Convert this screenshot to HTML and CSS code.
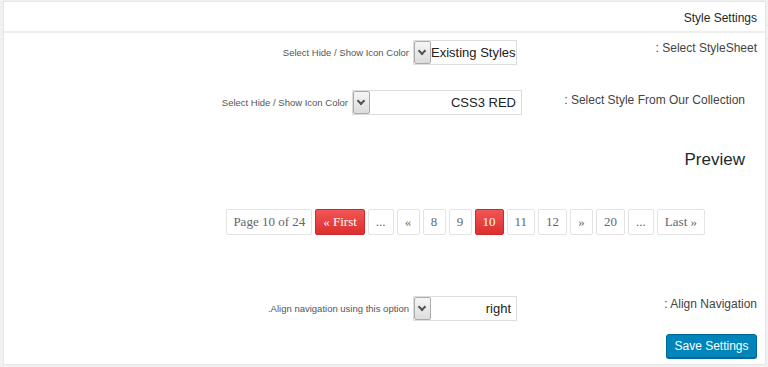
FILE: index.html
```html
<!doctype html>
<html lang="en">
  <head>
    <meta charset="UTF-8" />
    <title>Style Settings</title>
    <link rel="stylesheet" href="styles.css">
  </head>
  <body>
    <div class="card">
      <div class="card-head">Style Settings</div>

      <div class="row row-first">
        <div class="field">
          <span class="hint">Select Hide / Show Icon Color</span>
          <div class="select select-short">
            <span class="select-arrow"></span>
            <span class="select-value">Existing Styles</span>
          </div>
        </div>
        <div class="label">: Select StyleSheet</div>
      </div>

      <div class="row row-second">
        <div class="field">
          <span class="hint">Select Hide / Show Icon Color</span>
          <div class="select select-long">
            <span class="select-arrow"></span>
            <span class="select-value">CSS3 RED</span>
          </div>
        </div>
        <div class="label label-inset">: Select Style From Our Collection</div>
      </div>

      <h2 class="preview-title">Preview</h2>

      <div class="pager">
        <span class="page-item page-count">Page 10 of 24</span>
        <span class="page-item page-red">« First</span>
        <span class="page-item">...</span>
        <span class="page-item">«</span>
        <span class="page-item">8</span>
        <span class="page-item">9</span>
        <span class="page-item page-red">10</span>
        <span class="page-item">11</span>
        <span class="page-item">12</span>
        <span class="page-item">»</span>
        <span class="page-item">20</span>
        <span class="page-item">...</span>
        <span class="page-item">Last »</span>
      </div>

      <div class="row row-align">
        <div class="field">
          <span class="hint">.Align navigation using this option</span>
          <div class="select select-short">
            <span class="select-arrow"></span>
            <span class="select-value">right</span>
          </div>
        </div>
        <div class="label">: Align Navigation</div>
      </div>

      <div class="actions">
        <button type="button" class="button">Save Settings</button>
      </div>
    </div>
  </body>
</html>
```

FILE: styles.css
```css
* {
  margin: 0;
  padding: 0;
  box-sizing: border-box;
}

html,
body {
  height: 100%;
  background-color: #f1f1f1;
  font-family: "Liberation Sans", Arial, sans-serif;
  color: #444;
}

.card {
  margin: 1px 2px 0 3px;
  height: 364px;
  background-color: #fff;
  border: 1px solid #e5e5e5;
}

.card-head {
  height: 31px;
  padding: 9px 8px 0 0;
  text-align: right;
  font-size: 12px;
  color: #23282d;
  border-bottom: 2px solid #eee;
}

.row {
  display: flex;
  justify-content: flex-end;
  align-items: flex-start;
}

.row-first {
  margin-top: 7px;
}

.row-second {
  margin-top: 25px;
}

.row-align {
  margin-top: 61px;
}

.field {
  display: flex;
  align-items: center;
  gap: 4px;
}

.hint {
  font-size: 9.5px;
  color: #555;
}

.label {
  width: 248px;
  padding: 1px 8px 0 0;
  text-align: right;
  font-size: 12px;
  color: #444;
}

.label-inset {
  width: 243px;
  padding-right: 20px;
  padding-top: 3px;
}

.select {
  display: flex;
  height: 25px;
  border: 1px solid #ddd;
  background-color: #fff;
}

.select-short {
  width: 104px;
}

.select-long {
  width: 170px;
}

.select-arrow {
  position: relative;
  width: 17px;
  flex: none;
  background: linear-gradient(#f6f6f6, #dcdcdc);
  border: 1px solid #aaa;
  border-radius: 2px;
}

/* chevron drawn as a rotated corner */
.select-arrow::after {
  content: "";
  position: absolute;
  left: 4px;
  top: 6px;
  width: 4px;
  height: 4px;
  border-right: 2px solid #555;
  border-bottom: 2px solid #555;
  transform: rotate(45deg);
}

.select-value {
  flex: 1;
  padding: 0 5px 0 0;
  line-height: 23px;
  text-align: right;
  font-size: 13px;
  color: #222;
  white-space: nowrap;
}

.preview-title {
  margin-top: 35px;
  padding-right: 20px;
  text-align: right;
  font-size: 17px;
  font-weight: normal;
  line-height: 20px;
  color: #23282d;
}

.pager {
  display: flex;
  justify-content: flex-end;
  gap: 3px;
  margin-top: 39px;
  padding-right: 60px;
}

.page-item {
  min-width: 23px;
  height: 26px;
  padding: 0 7px;
  line-height: 24px;
  text-align: center;
  font-family: "Liberation Serif", "Times New Roman", serif;
  font-size: 13px;
  color: #666;
  background-color: #fff;
  border: 1px solid #e3e3e3;
  border-radius: 2px;
}

.page-count {
  padding: 0 6px;
}

.page-red {
  color: #fff;
  background: linear-gradient(#f25555, #dc2f2f);
  border-color: #c92a2a;
}

.actions {
  display: flex;
  justify-content: flex-end;
  margin-top: 13px;
  padding-right: 8px;
}

.button {
  width: 91px;
  height: 24px;
  font-family: "Liberation Sans", Arial, sans-serif;
  font-size: 12px;
  color: #fff;
  background-color: #0085ba;
  border: 1px solid #006799;
  border-radius: 3px;
  box-shadow: 0 1px 0 #006799;
}
```
